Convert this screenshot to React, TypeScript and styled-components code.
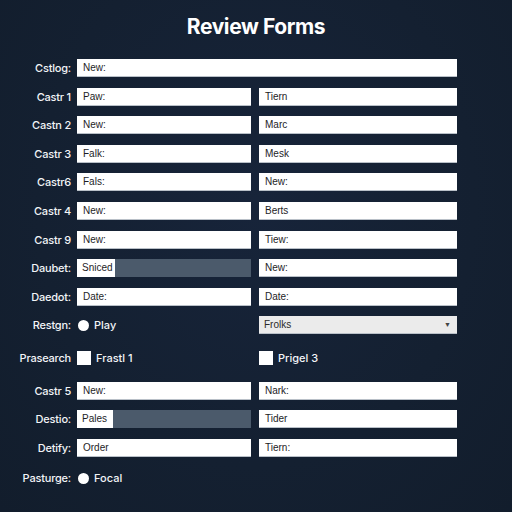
import styled, { createGlobalStyle } from "styled-components";

const GlobalStyle = createGlobalStyle`
  html, body {
    margin: 0;
    padding: 0;
    background: #142031;
  }
  body {
    font-family: Inter, "Liberation Sans", sans-serif;
  }
`;

const Page = styled.div`
  width: 512px;
  height: 512px;
  overflow: hidden;
  background: radial-gradient(ellipse at 50% 40%, #17243a 0%, #142031 60%, #121d2c 100%);
  box-sizing: border-box;
  padding-top: 13px;
`;

const Title = styled.h1`
  margin: 0;
  height: 28px;
  line-height: 28px;
  text-align: center;
  color: #ffffff;
  font-family: Inter, "Liberation Sans", sans-serif;
  font-weight: 700;
  font-size: 21px;
  letter-spacing: -0.4px;
`;

const Form = styled.div`
  margin-top: 18px;
  display: grid;
  grid-template-columns: 69px 174px 198px;
  grid-template-rows: repeat(10, 18px) 26px repeat(3, 18px) 22px;
  column-gap: 8px;
  row-gap: 10.6px;
  align-items: center;
`;

const Label = styled.div`
  grid-column: 1;
  margin-right: -2px;
  text-align: right;
  color: #f2f4f7;
  font-size: 11px;
  font-weight: 500;
  white-space: nowrap;
  letter-spacing: -0.2px;
`;

const Input = styled.div<{ $wide?: boolean }>`
  ${(p) => (p.$wide ? "grid-column: 2 / span 2;" : "")}
  height: 18px;
  box-sizing: border-box;
  background: #ffffff;
  border-bottom: 1px solid #b9c0c8;
  padding-left: 6px;
  line-height: 18px;
  font-size: 10px;
  color: #1d1d1f;
  font-family: "Liberation Sans", Arial, sans-serif;
`;

const Bar = styled.div`
  height: 18px;
  display: flex;
  background: #4b5a6b;
  font-size: 10px;
  font-family: "Liberation Sans", Arial, sans-serif;
  color: #1d1d1f;
`;

const BarFill = styled.div<{ $w: number }>`
  width: ${(p) => p.$w}px;
  background: #ffffff;
  padding-left: 5px;
  box-sizing: border-box;
  line-height: 18px;
`;

const Select = styled.div`
  height: 18px;
  box-sizing: border-box;
  background: #ebebeb;
  border-bottom: 1px solid #b9c0c8;
  padding: 0 6px 0 5px;
  display: flex;
  align-items: center;
  justify-content: space-between;
  font-size: 10px;
  color: #2a2a2a;
  font-family: "Liberation Sans", Arial, sans-serif;
`;

const Arrow = styled.span`
  font-size: 7px;
  color: #444;
`;

const Option = styled.div`
  display: flex;
  align-items: center;
  gap: 5px;
  color: #f2f4f7;
  font-size: 11px;
  font-weight: 500;
`;

const Radio = styled.span`
  width: 11px;
  height: 11px;
  border-radius: 50%;
  background: #ffffff;
  margin-left: 1px;
`;

const Check = styled.span`
  width: 14px;
  height: 14px;
  background: #ffffff;
`;

const Group = styled.div`
  display: contents;
`;

type Row = [string, string, string];

const topRows: Row[] = [
  ["Castr 1", "Paw:", "Tiern"],
  ["Castn 2", "New:", "Marc"],
  ["Castr 3", "Falk:", "Mesk"],
  ["Castr6", "Fals:", "New:"],
  ["Castr 4", "New:", "Berts"],
  ["Castr 9", "New:", "Tiew:"],
];

export default function App() {
  return (
    <>
      <GlobalStyle />
      <Page>
        <Title>Review Forms</Title>
        <Form>
          <Label>Cstlog:</Label>
          <Input $wide>New:</Input>

          {topRows.map(([l, a, b]) => (
            <Group key={l}>
              <Label>{l}</Label>
              <Input>{a}</Input>
              <Input>{b}</Input>
            </Group>
          ))}

          <Label>Daubet:</Label>
          <Bar>
            <BarFill $w={38}>Sniced</BarFill>
          </Bar>
          <Input>New:</Input>

          <Label>Daedot:</Label>
          <Input>Date:</Input>
          <Input>Date:</Input>

          <Label>Restgn:</Label>
          <Option>
            <Radio />
            Play
          </Option>
          <Select>
            Frolks
            <Arrow>▼</Arrow>
          </Select>

          <Label>Prasearch</Label>
          <Option>
            <Check />
            Frastl 1
          </Option>
          <Option>
            <Check />
            Prigel 3
          </Option>

          <Label>Castr 5</Label>
          <Input>New:</Input>
          <Input>Nark:</Input>

          <Label>Destio:</Label>
          <Bar>
            <BarFill $w={36}>Pales</BarFill>
          </Bar>
          <Input>Tider</Input>

          <Label>Detify:</Label>
          <Input>Order</Input>
          <Input>Tiern:</Input>

          <Label>Pasturge:</Label>
          <Option>
            <Radio />
            Focal
          </Option>
        </Form>
      </Page>
    </>
  );
}
